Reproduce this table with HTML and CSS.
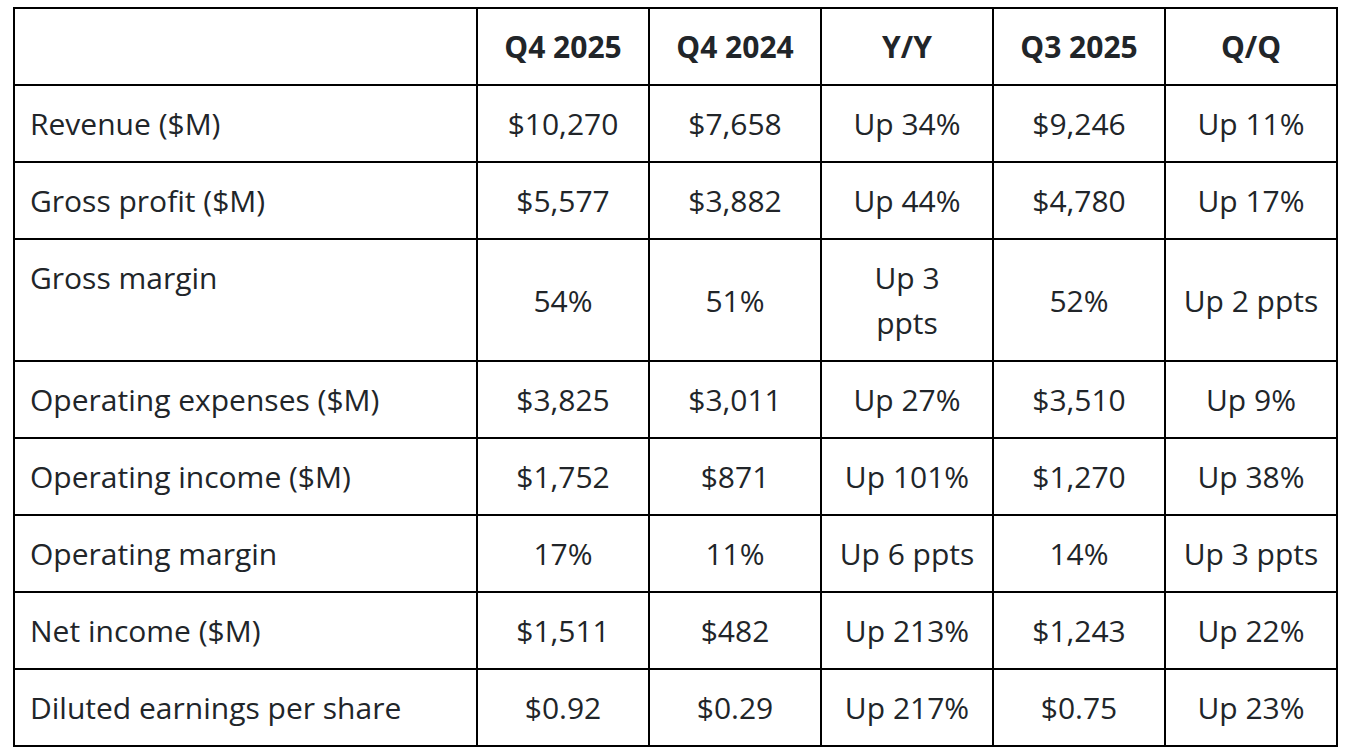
FILE: index.html
```html
<!DOCTYPE html>
<html>
<head>
<meta charset="utf-8">
<link rel="stylesheet" href="styles.css">
</head>
<body>
<table class="fin">
  <colgroup>
    <col class="c-label"><col class="c-num"><col class="c-num"><col class="c-num"><col class="c-num"><col class="c-num">
  </colgroup>
  <thead>
    <tr><th></th><th>Q4 2025</th><th>Q4 2024</th><th>Y/Y</th><th>Q3 2025</th><th>Q/Q</th></tr>
  </thead>
  <tbody>
    <tr><td>Revenue ($M)</td><td>$10,270</td><td>$7,658</td><td>Up 34%</td><td>$9,246</td><td>Up 11%</td></tr>
    <tr><td>Gross profit ($M)</td><td>$5,577</td><td>$3,882</td><td>Up 44%</td><td>$4,780</td><td>Up 17%</td></tr>
    <tr><td>Gross margin</td><td>54%</td><td>51%</td><td>Up 3<br>ppts</td><td>52%</td><td>Up 2 ppts</td></tr>
    <tr><td>Operating expenses ($M)</td><td>$3,825</td><td>$3,011</td><td>Up 27%</td><td>$3,510</td><td>Up 9%</td></tr>
    <tr><td>Operating income ($M)</td><td>$1,752</td><td>$871</td><td>Up 101%</td><td>$1,270</td><td>Up 38%</td></tr>
    <tr><td>Operating margin</td><td>17%</td><td>11%</td><td>Up 6 ppts</td><td>14%</td><td>Up 3 ppts</td></tr>
    <tr><td>Net income ($M)</td><td>$1,511</td><td>$482</td><td>Up 213%</td><td>$1,243</td><td>Up 22%</td></tr>
    <tr><td>Diluted earnings per share</td><td>$0.92</td><td>$0.29</td><td>Up 217%</td><td>$0.75</td><td>Up 23%</td></tr>
  </tbody>
</table>
</body>
</html>
```
FILE: styles.css
```css
html, body {
  margin: 0;
  background: #ffffff;
}
body {
  padding: 7px 13px;
  font-family: "Open Sans", "Liberation Sans", sans-serif;
  color: #212529;
}
.fin {
  border-collapse: collapse;
  width: 1322px;
  table-layout: fixed;
  font-size: 30px;
  line-height: 45px;
}
.c-label { width: 463px; }
.c-num { width: 172px; }
.fin th, .fin td {
  border: 2px solid #000;
  padding: 15px 8px;
  text-align: center;
  vertical-align: middle;
  white-space: nowrap;
}
.fin th {
  font-weight: 700;
}
.fin td:first-child {
  text-align: left;
  vertical-align: top;
  padding-left: 15px;
}
```
